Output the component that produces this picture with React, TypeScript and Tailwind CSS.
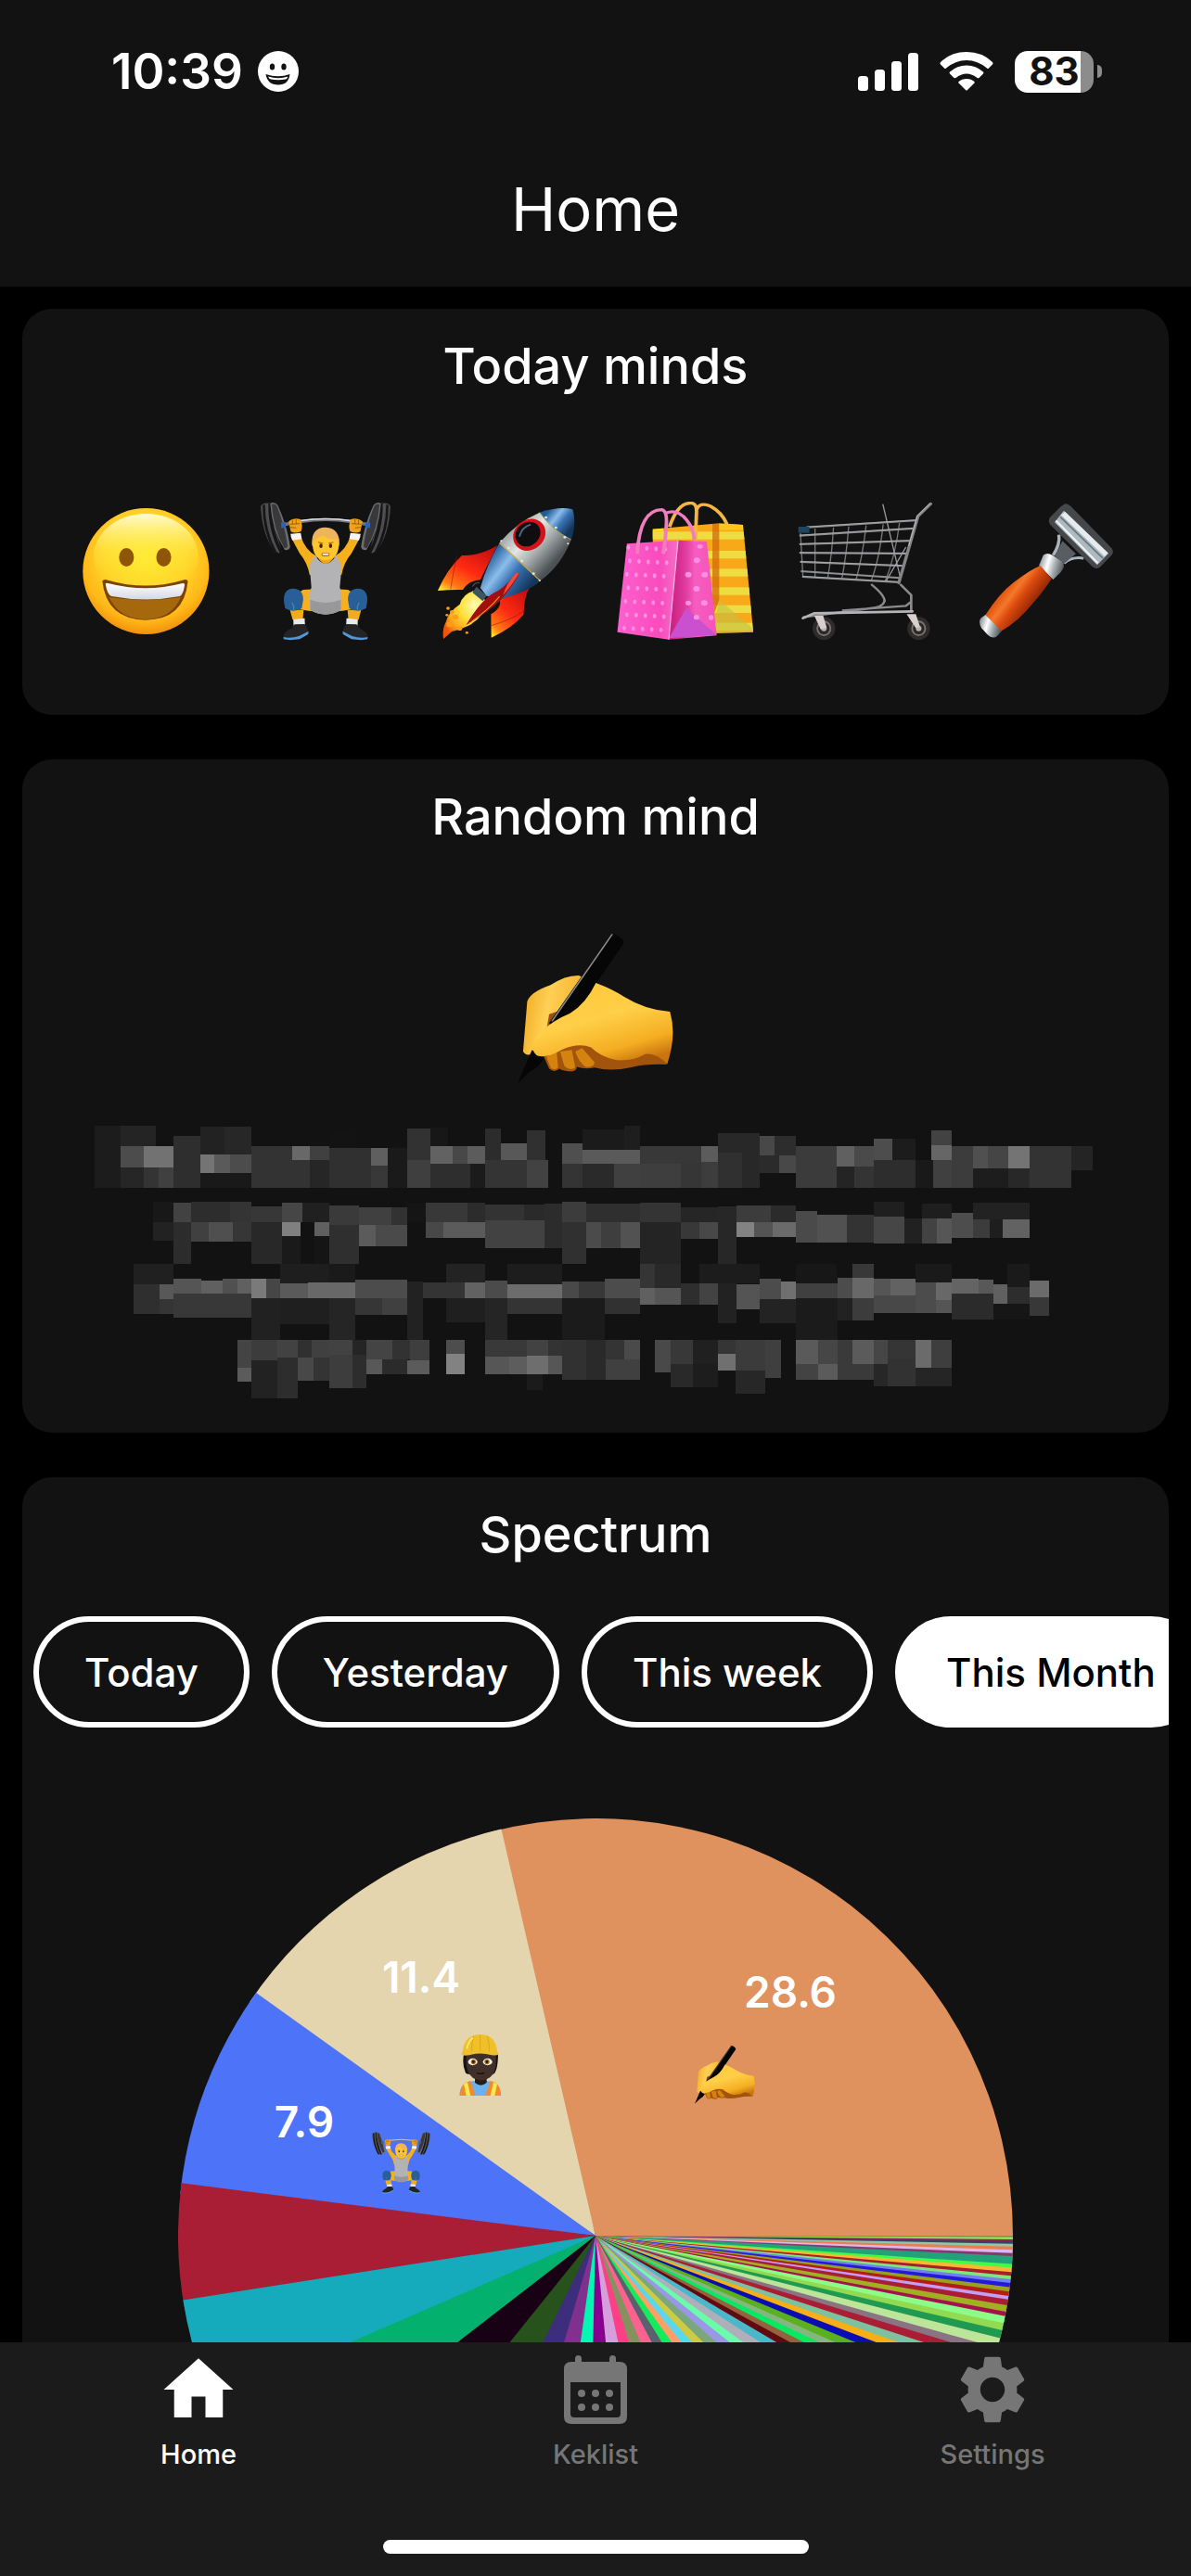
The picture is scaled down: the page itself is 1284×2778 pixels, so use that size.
import type { ReactNode, SVGProps } from "react";
import { MdHome, MdSettings } from "react-icons/md";

type Art = SVGProps<SVGSVGElement>;

/* ---------- Emoji illustrations ---------- */

function Grin(props: Art) {
  return (
    <svg viewBox="60 123 392 450" preserveAspectRatio="none" role="img" aria-label="grinning face" {...props}>
      <defs>
        <radialGradient id="grin-face" cx="0.5" cy="0.38" r="0.64">
          <stop offset="0" stopColor="#ffe92e" />
          <stop offset="0.5" stopColor="#ffd52b" />
          <stop offset="0.8" stopColor="#ffb818" />
          <stop offset="1" stopColor="#f08a0a" />
        </radialGradient>
        <linearGradient id="grin-shine" x1="0" y1="0" x2="0" y2="1">
          <stop offset="0" stopColor="#fffbd0" />
          <stop offset="0.45" stopColor="#fff04a" stopOpacity="0.35" />
          <stop offset="0.8" stopColor="#ffe92e" stopOpacity="0" />
        </linearGradient>
        <linearGradient id="grin-teeth" x1="0" y1="0" x2="0" y2="1">
          <stop offset="0" stopColor="#ffffff" />
          <stop offset="1" stopColor="#d3d8e4" />
        </linearGradient>
      </defs>
      <ellipse cx="257" cy="348" rx="178" ry="204" fill="url(#grin-face)" />
      <ellipse cx="257" cy="300" rx="147" ry="138" fill="url(#grin-shine)" />
      <ellipse cx="202" cy="303" rx="21" ry="30" fill="#8f560a" />
      <ellipse cx="307" cy="303" rx="21" ry="30" fill="#8f560a" />
      <path d="M134 380 Q138 372 150 377 Q256 412 360 377 Q375 372 375 382 Q364 505 256 506 Q146 503 134 380Z" fill="#7d4305" />
      <path d="M153 432 Q256 452 355 432 Q330 502 256 504 Q180 502 153 432Z" fill="#a5680c" />
      <path d="M143 390 Q144 384 153 388 Q256 418 357 388 Q367 385 366 392 Q362 424 352 429 Q256 450 160 429 Q148 425 143 390Z" fill="url(#grin-teeth)" />
    </svg>
  );
}

function Lifter(props: Art) {
  const plates = (
    <g>
      <path d="M580 138 Q586 126 600 128 L636 270 Q634 292 620 285 Q584 230 580 138Z" fill="#4a4a4c" />
      <path d="M586 134 Q584 210 616 284 L626 288 Q592 215 592 132Z" fill="#161618" />
      <path d="M594 130 L606 127 Q612 220 640 284 L630 290 Q598 225 594 130Z" fill="#505053" />
      <path d="M602 128 Q600 215 634 288 L642 286 Q612 220 610 127Z" fill="#161618" />
      <path d="M607 128 Q620 122 628 134 Q655 200 663 268 Q662 282 648 279 Q612 215 607 128Z" fill="#6d6d70" />
      <path d="M611 132 Q620 128 626 138 Q648 200 656 266 Q654 276 646 272 Q616 210 611 132Z" fill="#39393c" />
    </g>
  );
  const limb = (
    <g>
      <path d="M664 235 L693 234 Q705 280 738 300 L740 360 L718 360 Q712 320 690 290Z" fill="#f6b01d" />
      <path d="M664 227 L693 224 L696 244 L669 248Z" fill="#f5f5f8" />
      <path d="M659 187 Q672 174 692 180 Q700 200 694 219 Q678 228 665 220Z" fill="#eda41a" />
      <path d="M662 196 L690 194 M664 206 L680 208 M670 182 V196 M680 180 V196" stroke="#9c5a08" strokeWidth="2.5" fill="none" />
      <path d="M745 405 L700 408 Q682 415 688 450 L692 472 Q720 480 750 478Z" fill="#f6b01d" />
      <path d="M662 470 L701 474 L699 504 L670 505Z" fill="#f2ab1b" />
      <path d="M672 504 L704 500 L705 522 L673 524Z" fill="#e9e9ee" />
      <path d="M646 450 Q642 405 672 404 Q700 405 700 440 L696 468 Q672 484 649 468Z" fill="#285f98" />
      <path d="M668 450 Q675 460 673 474" stroke="#4a85bd" strokeWidth="3" fill="none" />
      <path d="M644 560 Q645 545 668 532 L676 520 L704 519 Q714 530 714 545 L690 562 Q660 570 644 560Z" fill="#242427" />
      <path d="M644 561 Q665 566 688 558 L715 542 L714 552 L690 568 Q660 573 645 568Z" fill="#5297d8" />
    </g>
  );
  return (
    <svg viewBox="567 123 392 450" preserveAspectRatio="none" role="img" aria-label="person lifting weights" {...props}>
      {plates}
      <g transform="matrix(-1 0 0 1 1526 0)">{plates}</g>
      <path d="M640 198 L692 188 Q763 174 836 188 L888 198" stroke="#74747a" strokeWidth="10" fill="none" />
      <path d="M690 185 Q763 172 836 185" stroke="#dcdce2" strokeWidth="5" fill="none" />
      <path d="M638 190 h13 v18 h-13z M875 190 h13 v18 h-13z" fill="#2a63b8" />
      {limb}
      <g transform="matrix(-1 0 0 1 1526 0)">{limb}</g>
      <path d="M733 296 Q763 350 794 296 L808 330 Q806 370 803 400 Q812 430 806 474 Q763 502 720 474 Q714 430 723 400 Q720 360 718 330Z" fill="#b3b3b6" />
      <path d="M720 440 Q763 460 806 440 L806 474 Q763 502 720 474Z" fill="#98989b" />
      <path d="M738 298 Q763 350 790 298 L784 290 H742Z" fill="#eda41a" />
      <path d="M726 250 Q726 220 763 220 Q801 220 801 250 Q802 312 763 313 Q725 312 726 250Z" fill="#ffc62e" />
      <path d="M725 268 Q720 206 763 206 Q806 208 801 268 L796 244 Q775 250 756 232 Q742 240 732 246Z" fill="#edb45c" />
      <ellipse cx="750" cy="266" rx="4.5" ry="7" fill="#3a2106" />
      <ellipse cx="777" cy="266" rx="4.5" ry="7" fill="#3a2106" />
      <path d="M742 254 L756 258 M785 254 L771 258" stroke="#a8660f" strokeWidth="3" />
      <rect x="751" y="288" width="24" height="12" rx="6" fill="#b06d18" />
      <rect x="754" y="290" width="18" height="6" rx="3" fill="#f5f0ea" />
    </svg>
  );
}

function Rocket(props: Art) {
  return (
    <svg viewBox="1073 123 392 450" preserveAspectRatio="none" role="img" aria-label="rocket" {...props}>
      <defs>
        <linearGradient id="rk-body" x1="0.1" y1="0.2" x2="0.75" y2="0.75">
          <stop offset="0" stopColor="#8d9494" />
          <stop offset="0.4" stopColor="#e3e6e2" />
          <stop offset="0.65" stopColor="#a9afae" />
          <stop offset="1" stopColor="#4b5154" />
        </linearGradient>
        <linearGradient id="rk-blue" x1="0.1" y1="0.3" x2="0.8" y2="0.8">
          <stop offset="0" stopColor="#235a98" />
          <stop offset="0.35" stopColor="#8cbdea" />
          <stop offset="0.6" stopColor="#3a74b5" />
          <stop offset="1" stopColor="#15365c" />
        </linearGradient>
        <linearGradient id="rk-fin" x1="0.8" y1="0" x2="0.1" y2="1">
          <stop offset="0" stopColor="#c40f0f" />
          <stop offset="0.5" stopColor="#ff2a12" />
          <stop offset="0.85" stopColor="#ff7d14" />
          <stop offset="1" stopColor="#ffe22b" />
        </linearGradient>
        <radialGradient id="rk-fire" cx="0.7" cy="0.3" r="0.8">
          <stop offset="0" stopColor="#fffbb8" />
          <stop offset="0.4" stopColor="#ffe23a" />
          <stop offset="0.75" stopColor="#ffa51c" />
          <stop offset="1" stopColor="#f0560b" />
        </radialGradient>
      </defs>
      <path d="M1246 265 Q1195 300 1146 297 Q1105 340 1078 411 Q1118 407 1149 408 Q1165 378 1198 376Z" fill="url(#rk-fin)" />
      <path d="M1337 402 Q1322 425 1320 488 Q1290 530 1229 563 L1228 487 Q1262 465 1251 435Z" fill="url(#rk-fin)" />
      <path d="M1132 298 Q1122 350 1114 406 M1228 524 Q1285 505 1320 478" stroke="#8e1208" strokeWidth="1.5" fill="none" />
      <path d="M1178 412 L1222 450 Q1205 500 1162 526 Q1140 538 1118 543 L1094 567 Q1090 535 1101 512 Q1108 480 1140 455 Q1150 420 1178 412Z" fill="url(#rk-fire)" />
      <g fill="#ff9d18">
        <circle cx="1107" cy="468" r="5" />
        <circle cx="1118" cy="480" r="6" />
        <circle cx="1104" cy="490" r="4" />
        <circle cx="1160" cy="547" r="4" />
        <circle cx="1140" cy="533" r="7" />
        <circle cx="1112" cy="520" r="9" />
        <circle cx="1128" cy="496" r="8" />
      </g>
      <path d="M1187 398 L1216 427 L1205 445 L1176 417Z" fill="#3c5561" />
      <path d="M1176 398 q6 -14 20 -12" stroke="#555" strokeWidth="3" fill="none" />
      <path d="M1252 256 L1368 378 Q1335 415 1255 437 L1216 428 L1198 402 Q1215 330 1252 256Z" fill="url(#rk-blue)" />
      <path d="M1365 158 Q1300 190 1252 256 L1368 378 Q1425 330 1454 246 Q1410 205 1365 158Z" fill="url(#rk-body)" />
      <path d="M1365 158 Q1420 137 1458 148 Q1470 190 1454 246 Q1400 215 1365 158Z" fill="url(#rk-blue)" />
      <path d="M1252 257 L1367 379" stroke="#d8ae36" strokeWidth="3" />
      <path d="M1365 158 Q1400 215 1454 246" stroke="#b9a44a" strokeWidth="2.5" fill="none" />
      <ellipse cx="1336" cy="230" rx="44" ry="53" transform="rotate(25 1336 230)" fill="#d3121a" />
      <ellipse cx="1332" cy="228" rx="34" ry="41" transform="rotate(25 1332 228)" fill="#100d10" />
      <path d="M1308 236 Q1315 205 1340 197" stroke="#4a6a80" strokeWidth="5" fill="none" />
      <g fill="#dfe4e6">
        <circle cx="1383" cy="174" r="4" />
        <circle cx="1411" cy="207" r="4" />
        <circle cx="1436" cy="238" r="4" />
        <circle cx="1278" cy="273" r="4" />
        <circle cx="1315" cy="315" r="4" />
        <circle cx="1348" cy="356" r="4" />
        <circle cx="1257" cy="250" r="3" />
        <circle cx="1365" cy="378" r="3" />
        <circle cx="1445" cy="259" r="3" />
      </g>
      <path d="M1301 350 L1307 360 Q1275 420 1252 445 Q1215 485 1158 522 Q1205 430 1250 410 Q1275 390 1301 350Z" fill="#a30f10" />
      <path d="M1301 350 L1306 358 Q1280 405 1262 425 Q1272 385 1301 350Z" fill="#f34a3c" />
      <path d="M1252 430 Q1220 475 1165 518" stroke="#f0a21e" strokeWidth="3" fill="none" />
    </svg>
  );
}

function Bags(props: Art) {
  const dots: [number, number][] = [];
  for (let row = 0; row < 7; row++) {
    for (let col = 0; col < 5; col++) {
      dots.push([(row % 2 ? 104 : 98) + col * 26 - row * 2, 271 + row * 43.5 + col * 1.5]);
    }
  }
  return (
    <svg viewBox="63 123 392 450" preserveAspectRatio="none" role="img" aria-label="shopping bags" {...props}>
      <defs>
        <linearGradient id="bag-pink" x1="0" y1="0" x2="1" y2="0">
          <stop offset="0" stopColor="#ff5fd0" />
          <stop offset="0.7" stopColor="#f94bbd" />
          <stop offset="1" stopColor="#f46fc6" />
        </linearGradient>
        <linearGradient id="bag-side" x1="0" y1="0" x2="1" y2="0">
          <stop offset="0" stopColor="#c41d7d" />
          <stop offset="0.35" stopColor="#e23ba0" />
          <stop offset="0.55" stopColor="#f65dc0" />
          <stop offset="1" stopColor="#f553b9" />
        </linearGradient>
        <clipPath id="bag-yellow">
          <path d="M166 212 L354 193 L421 198 L450 545 L330 549 L170 500Z" />
        </clipPath>
      </defs>
      <g clipPath="url(#bag-yellow)">
        <rect x="160" y="190" width="300" height="370" fill="#f9a81a" />
        {[220, 282, 340, 400, 458, 515].map((y) => (
          <rect key={y} x="160" y={y} width="300" height="25" fill="#eddc42" />
        ))}
        <path d="M335 193 L354 193 V440 L335 500Z" fill="#cf6c08" opacity="0.75" />
        <path d="M354 440 L450 535 V550 H335Z" fill="#c3c244" opacity="0.6" />
        <rect x="166" y="190" width="30" height="30" fill="#ffd828" />
        <rect x="354" y="193" width="68" height="22" fill="#ffc61b" />
      </g>
      <path d="M214 205 Q238 122 278 128 Q292 132 290 160 L287 250 M290 150 Q298 122 330 138 Q362 158 376 196" stroke="#f3b545" strokeWidth="10" fill="none" />
      <path d="M94 259 L238 248 L212 569 L67 545Z" fill="url(#bag-pink)" />
      <path d="M238 248 L319 252 L347 556 L212 569Z" fill="url(#bag-side)" />
      <path d="M261 468 L212 565 L346 554Z" fill="#c950cf" />
      <path d="M238 248 L212 569" stroke="#ffb3ea" strokeWidth="3" />
      <g fill="#ff8fdf">
        {dots.map(([x, y]) => (
          <ellipse key={`${x}-${y}`} cx={x} cy={y} rx="5" ry="8" />
        ))}
        <ellipse cx="291" cy="313" rx="9" ry="9" />
        <ellipse cx="267" cy="359" rx="9" ry="9" />
        <ellipse cx="313" cy="359" rx="9" ry="9" />
        <ellipse cx="290" cy="405" rx="9" ry="9" />
        <ellipse cx="267" cy="451" rx="8" ry="8" />
        <ellipse cx="312" cy="451" rx="9" ry="9" />
        <ellipse cx="290" cy="497" rx="8" ry="8" />
        <ellipse cx="331" cy="498" rx="7" ry="8" />
        <ellipse cx="300" cy="268" rx="8" ry="7" />
      </g>
      <path d="M123 292 Q130 150 192 149 Q208 152 205 200 Q202 260 196 292 M204 160 Q236 145 262 182 Q282 210 284 248" stroke="#f27cc0" strokeWidth="10" fill="none" />
    </svg>
  );
}

function Cart(props: Art) {
  return (
    <svg viewBox="570 123 392 450" preserveAspectRatio="none" role="img" aria-label="shopping cart" {...props}>
      <g fill="none" stroke="#77777a" strokeWidth="3.5">
        <path d="M583 225 L590 366 M624 210 V366 M676 206 Q672 290 660 368 M719 203 Q712 300 700 370 M768 200 Q758 300 740 374 M816 196 Q805 310 783 376 M862 192 Q850 300 822 380" />
        <path d="M815 131 L865 372 M880 270 L824 380" stroke="#9a9a9d" />
      </g>
      <g fill="none" stroke="#8f9092" strokeWidth="6">
        <path d="M600 206 L908 184 M580 233 L900 210 M580 261 L893 250 M580 289 L882 291 M582 318 L872 331 M584 348 L864 370 M588 366 L860 384" />
      </g>
      <g fill="none" stroke="#c9c9cc" strokeWidth="1.5">
        <path d="M600 204 L908 182 M580 231 L900 208 M580 259 L893 248 M580 287 L882 289 M582 316 L872 329 M588 364 L860 382" />
      </g>
      <path d="M950 130 L914 170 L860 386" stroke="#858588" strokeWidth="9" fill="none" strokeLinecap="round" strokeLinejoin="round" />
      <path d="M948 129 L912 169 L888 266" stroke="#c4c4c7" strokeWidth="2.5" fill="none" />
      <path d="M782 390 Q820 425 820 445 Q815 465 780 468 L590 497 M864 390 L895 425 V478 M893 448 L880 460 L700 475" stroke="#8b8b8e" strokeWidth="7" fill="none" />
      <path d="M590 500 L622 484 L898 478" stroke="#b5b5b8" strokeWidth="8" fill="none" strokeLinecap="round" />
      <rect x="577" y="204" width="31" height="20" fill="#1f4560" />
      {[649, 916].map((x) => (
        <g key={x}>
          <ellipse cx={x} cy="533" rx="32" ry="37" fill="#2f2b2b" />
          <ellipse cx={x} cy="533" rx="21" ry="25" fill="#77716f" />
          <ellipse cx={x} cy="533" rx="16" ry="19" fill="#2a2727" />
          <ellipse cx={x} cy="533" rx="8" ry="9" fill="#b9b1ae" />
        </g>
      ))}
      <path d="M622 492 H647 L657 530 L640 536Z M882 487 H908 L920 528 L908 532Z" fill="#d9cfcd" />
    </svg>
  );
}

function Razor(props: Art) {
  return (
    <svg viewBox="1074 123 392 450" preserveAspectRatio="none" role="img" aria-label="razor" {...props}>
      <defs>
        <linearGradient id="rz-handle" x1="0.25" y1="0.35" x2="0.65" y2="0.65">
          <stop offset="0" stopColor="#d94a08" />
          <stop offset="0.35" stopColor="#f4782a" />
          <stop offset="0.6" stopColor="#dc4a0e" />
          <stop offset="1" stopColor="#9a2a06" />
        </linearGradient>
        <linearGradient id="rz-metal" x1="0" y1="0.3" x2="1" y2="0.6">
          <stop offset="0" stopColor="#8b9196" />
          <stop offset="0.35" stopColor="#ffffff" />
          <stop offset="0.65" stopColor="#9fa8ac" />
          <stop offset="1" stopColor="#4b5053" />
        </linearGradient>
      </defs>
      <path d="M1308 230 Q1312 262 1292 296 M1322 322 Q1345 300 1378 306" stroke="#a9b4bd" strokeWidth="9" fill="none" />
      <path d="M1318 250 L1356 292 L1322 324 L1296 300Z" fill="#595d62" />
      <path d="M1264 296 Q1275 286 1290 296 L1318 318 Q1328 330 1314 350 L1292 375 L1252 330Z" fill="url(#rz-metal)" />
      <path d="M1256 330 L1288 372 Q1260 420 1236 450 Q1195 510 1144 543 L1101 490 Q1140 420 1180 385 Q1225 345 1256 330Z" fill="url(#rz-handle)" />
      <path d="M1101 489 L1147 542 L1134 558 Q1122 570 1106 552 L1090 532 Q1080 512 1088 500Z" fill="url(#rz-metal)" />
      <path d="M1325 130 Q1332 128 1342 138 L1458 275 Q1464 288 1455 298 L1425 334 Q1414 344 1403 334 L1284 198 Q1276 186 1283 174 L1312 140Z" fill="#46474a" />
      <path d="M1322 152 L1448 290 L1416 328 L1296 190Z" fill="#aebac0" />
      <path d="M1326 156 L1446 289 L1437 300 L1314 166Z" fill="#e6ecee" />
      <path d="M1312 172 L1432 306" stroke="#6b7880" strokeWidth="5" />
      <path d="M1300 184 L1418 322" stroke="#eef3f5" strokeWidth="6" />
    </svg>
  );
}

function WritingHand(props: Art) {
  return (
    <svg viewBox="676 124 227 422" preserveAspectRatio="none" role="img" aria-label="writing hand" {...props}>
      <defs>
        <linearGradient id="wh-palm" x1="0.2" y1="0" x2="0.7" y2="1">
          <stop offset="0" stopColor="#ffc93a" />
          <stop offset="0.45" stopColor="#ffcf48" />
          <stop offset="0.8" stopColor="#f5ae22" />
          <stop offset="1" stopColor="#c9740e" />
        </linearGradient>
        <linearGradient id="wh-index" x1="0" y1="0" x2="1" y2="0.2">
          <stop offset="0" stopColor="#efa51a" />
          <stop offset="0.4" stopColor="#ffd055" />
          <stop offset="1" stopColor="#f2a81d" />
        </linearGradient>
      </defs>
      <path d="M714 468 L722 503 Q729 516 737 503 Q742 510 755 511 Q763 508 762 498 Q775 506 788 500 Q812 512 842 499 Q862 489 893 491 L898 450 L780 420Z" fill="#a2530c" />
      <path d="M718 470 L724 500 Q730 510 735 500 L733 455Z M738 455 L744 495 Q752 510 760 500 L755 450Z M760 455 Q765 485 775 498 Q788 500 788 485 L770 445Z" fill="#d5830f" />
      <path d="M684 455 L690 315 Q694 288 724 268 Q746 240 765 241 L790 262 L740 350 L716 400 L697 460 Q689 470 684 455Z" fill="url(#wh-index)" />
      <path d="M718 395 L722 350 L745 335 L740 370Z" fill="#96500c" />
      <path d="M812 126 Q815 122 820 128 Q832 140 830 152 L774 310 Q766 335 748 350 L725 385 L722 374Z" fill="#060606" />
      <path d="M814 125 L726 370" stroke="#8a8a8a" strokeWidth="2.5" />
      <path d="M697 450 L676 545 L693 512 Q708 498 714 474Z" fill="#060606" />
      <path d="M790 262 Q815 280 832 302 Q862 338 898 343 Q908 410 894 490 Q878 458 862 462 Q845 482 820 479 Q797 470 783 443 Q765 428 740 450 Q718 475 704 466 Q692 445 704 408 Q728 366 752 348 Q776 320 790 262Z" fill="url(#wh-palm)" />
    </svg>
  );
}

function Worker(props: Art) {
  return (
    <svg viewBox="45 41 138 199" preserveAspectRatio="none" role="img" aria-label="construction worker" {...props}>
      <path d="M46 240 Q46 196 92 192 H134 Q180 196 181 240Z" fill="#6db0ee" />
      <path d="M48 240 Q48 208 66 198 L82 192 L98 240Z M179 240 Q180 208 162 198 L146 192 L130 240Z" fill="#f08a2c" />
      <path d="M60 202 L72 196 L82 240 H68Z M168 202 L156 196 L146 240 H160Z" fill="#f6e94e" />
      <path d="M96 175 H134 V198 Q115 214 96 198Z" fill="#2a1b15" />
      <path d="M60 106 Q54 140 66 166 L72 170 H156 Q170 160 171 106Z" fill="#16100e" />
      <path d="M68 100 H164 V140 Q158 188 116 190 Q74 188 68 140Z" fill="#412f29" />
      <ellipse cx="89" cy="130" rx="15" ry="11" fill="#f5f0ea" />
      <ellipse cx="137" cy="130" rx="15" ry="11" fill="#f5f0ea" />
      <circle cx="91" cy="130" r="8" fill="#a86a1e" />
      <circle cx="135" cy="130" r="8" fill="#a86a1e" />
      <circle cx="91" cy="130" r="4" fill="#120a04" />
      <circle cx="135" cy="130" r="4" fill="#120a04" />
      <path d="M102 166 Q114 172 126 166" stroke="#160c09" strokeWidth="4" fill="none" />
      <path d="M56 98 Q60 42 113 41 Q164 42 168 96 L173 104 Q170 111 150 108 Q113 98 78 108 Q56 112 52 104Z" fill="#f0c02a" />
      <path d="M92 46 Q84 70 86 96 M113 42 V94 M136 46 Q144 70 142 96" stroke="#dda618" strokeWidth="3" fill="none" />
      <path d="M70 88 Q76 60 90 52" stroke="#ffe36b" strokeWidth="6" fill="none" />
    </svg>
  );
}

/* ---------- Pixelated note text ---------- */

// x, y, width, height, grey level
const MOSAIC: [number, number, number, number, string][] = [
  [57, 664, 38, 174, "1c"], [95, 664, 51, 57, "24"], [95, 721, 33, 60, "4c"], [128, 721, 44, 60, "72"],
  [95, 781, 33, 57, "26"], [128, 781, 22, 57, "34"], [150, 781, 22, 57, "40"], [172, 693, 39, 145, "2e"],
  [211, 666, 35, 79, "22"], [246, 666, 39, 79, "27"], [211, 745, 21, 52, "74"], [232, 745, 23, 52, "5a"],
  [255, 745, 30, 52, "4c"], [211, 797, 74, 41, "19"], [285, 721, 85, 117, "33"], [345, 721, 25, 39, "68"],
  [370, 721, 29, 39, "40"], [370, 760, 29, 78, "26"], [399, 684, 38, 43, "13"], [399, 727, 61, 111, "30"],
  [460, 727, 24, 49, "5f"], [460, 776, 24, 62, "38"], [484, 727, 28, 111, "1a"], [512, 672, 34, 166, "32"],
  [512, 760, 34, 78, "3f"], [546, 670, 26, 51, "17"], [546, 721, 33, 50, "62"], [579, 721, 21, 50, "48"],
  [600, 721, 26, 50, "5c"], [546, 771, 58, 67, "2e"], [604, 771, 22, 67, "1b"], [626, 672, 23, 88, "2c"],
  [649, 713, 38, 47, "58"], [687, 677, 27, 83, "30"], [626, 760, 61, 78, "34"], [687, 760, 31, 78, "42"],
  [739, 713, 29, 58, "4f"], [768, 674, 61, 58, "1b"], [829, 664, 23, 68, "1e"], [768, 732, 84, 39, "5a"],
  [739, 771, 29, 67, "34"], [768, 771, 46, 67, "2a"], [814, 771, 38, 67, "40"], [852, 721, 89, 117, "38"],
  [852, 771, 59, 67, "3e"], [941, 721, 24, 45, "5c"], [911, 766, 30, 72, "36"], [941, 766, 24, 72, "3d"],
  [965, 685, 61, 153, "28"], [965, 740, 35, 98, "30"], [1026, 693, 22, 54, "48"], [1048, 693, 31, 54, "2d"],
  [1026, 747, 28, 50, "2b"], [1054, 747, 25, 50, "48"], [1079, 721, 59, 117, "3b"], [1138, 721, 26, 58, "60"],
  [1164, 721, 28, 58, "4a"], [1138, 779, 26, 59, "24"], [1164, 779, 28, 59, "34"], [1192, 700, 27, 60, "4d"],
  [1219, 700, 34, 60, "1c"], [1192, 760, 61, 78, "2d"], [1253, 760, 26, 78, "19"], [1276, 677, 30, 42, "42"],
  [1276, 719, 30, 41, "66"], [1279, 760, 27, 78, "40"], [1306, 721, 31, 117, "3c"], [1337, 721, 22, 63, "50"],
  [1359, 721, 29, 63, "45"], [1388, 721, 31, 63, "74"], [1337, 784, 51, 54, "1d"], [1388, 784, 31, 54, "28"],
  [1419, 721, 61, 117, "33"], [1480, 721, 31, 68, "24"],

  [142, 878, 30, 58, "18"], [172, 881, 25, 55, "42"], [197, 878, 57, 58, "2d"], [254, 878, 31, 58, "34"],
  [142, 936, 30, 52, "22"], [172, 936, 25, 117, "2c"], [197, 936, 26, 54, "40"], [223, 936, 35, 54, "4f"],
  [258, 936, 27, 54, "36"], [285, 891, 45, 45, "37"], [330, 881, 30, 55, "46"], [360, 881, 39, 55, "20"],
  [285, 936, 45, 117, "28"], [330, 936, 27, 39, "80"], [378, 936, 21, 39, "60"], [330, 975, 27, 78, "1a"],
  [378, 975, 21, 78, "15"], [399, 889, 43, 54, "3a"], [442, 894, 47, 49, "40"], [489, 894, 23, 49, "32"],
  [399, 943, 43, 110, "2f"], [442, 943, 24, 61, "5b"], [466, 943, 46, 61, "4a"], [512, 881, 27, 55, "15"],
  [539, 881, 61, 55, "38"], [600, 881, 26, 55, "2c"], [539, 936, 26, 44, "48"], [565, 936, 61, 44, "5b"],
  [626, 886, 57, 44, "33"], [683, 886, 29, 44, "2a"], [712, 883, 27, 126, "2c"], [626, 930, 86, 79, "42"],
  [739, 878, 34, 58, "3c"], [773, 883, 79, 53, "2f"], [739, 936, 34, 117, "30"], [773, 936, 22, 73, "4b"],
  [795, 936, 28, 73, "3e"], [823, 936, 29, 73, "52"], [852, 881, 60, 55, "34"], [852, 936, 60, 117, "24"],
  [912, 894, 53, 42, "26"], [912, 936, 26, 46, "38"], [938, 936, 27, 46, "48"], [965, 891, 27, 162, "27"],
  [992, 889, 50, 47, "3c"], [1042, 889, 37, 47, "2b"], [992, 936, 26, 41, "82"], [1018, 936, 27, 41, "54"],
  [1045, 936, 34, 41, "6a"], [1079, 904, 31, 89, "4a"], [1110, 915, 43, 78, "51"], [1153, 915, 39, 78, "33"],
  [1192, 878, 45, 42, "1f"], [1192, 920, 45, 76, "46"], [1237, 925, 26, 71, "21"], [1263, 883, 43, 42, "1e"],
  [1263, 925, 22, 71, "42"], [1285, 925, 21, 71, "56"], [1306, 909, 31, 71, "4d"], [1337, 881, 82, 47, "22"],
  [1337, 928, 24, 52, "3c"], [1361, 928, 20, 52, "1e"], [1381, 928, 38, 52, "62"],

  [114, 1053, 58, 58, "20"], [114, 1111, 37, 83, "2f"], [151, 1111, 21, 41, "58"], [151, 1152, 21, 42, "35"],
  [172, 1095, 40, 42, "55"], [212, 1100, 31, 37, "60"], [243, 1095, 22, 42, "50"], [265, 1095, 20, 42, "60"],
  [285, 1095, 22, 55, "7a"], [307, 1095, 21, 55, "46"], [172, 1137, 113, 68, "38"], [328, 1053, 71, 55, "1e"],
  [399, 1053, 38, 52, "1a"], [328, 1108, 40, 42, "5a"], [368, 1105, 69, 45, "68"], [285, 1150, 43, 117, "21"],
  [328, 1150, 71, 73, "1f"], [399, 1150, 38, 117, "25"], [437, 1098, 75, 52, "4c"], [437, 1150, 39, 47, "36"],
  [476, 1150, 36, 47, "40"], [512, 1103, 23, 164, "22"], [535, 1105, 61, 45, "34"], [570, 1053, 56, 52, "23"],
  [596, 1105, 30, 45, "62"], [570, 1150, 56, 68, "1f"], [626, 1100, 32, 50, "4b"], [658, 1053, 81, 58, "1d"],
  [658, 1111, 81, 39, "6c"], [626, 1150, 32, 117, "25"], [658, 1150, 81, 44, "34"], [739, 1103, 24, 47, "49"],
  [763, 1103, 37, 47, "38"], [800, 1095, 52, 55, "4c"], [739, 1150, 61, 117, "1b"], [800, 1150, 52, 44, "31"],
  [852, 1053, 22, 68, "35"], [874, 1053, 38, 68, "29"], [852, 1121, 22, 47, "60"], [874, 1121, 38, 47, "55"],
  [912, 1108, 27, 60, "2e"], [939, 1108, 26, 60, "43"], [939, 1053, 87, 55, "1c"], [965, 1108, 27, 112, "22"],
  [992, 1111, 34, 70, "54"], [1026, 1095, 31, 57, "4c"], [1057, 1103, 22, 49, "70"], [1026, 1152, 53, 68, "23"],
  [1079, 1053, 60, 55, "17"], [1079, 1108, 61, 42, "40"], [1140, 1092, 21, 58, "4c"], [1161, 1053, 31, 39, "38"],
  [1161, 1092, 31, 58, "68"], [1079, 1150, 61, 117, "1b"], [1140, 1150, 21, 63, "22"], [1161, 1150, 31, 63, "3c"],
  [1192, 1095, 61, 47, "55"], [1217, 1095, 36, 47, "62"], [1192, 1142, 61, 50, "48"], [1253, 1053, 53, 52, "1a"],
  [1253, 1105, 30, 87, "4c"], [1283, 1105, 23, 50, "68"], [1283, 1155, 23, 37, "55"], [1306, 1095, 39, 42, "64"],
  [1345, 1098, 22, 39, "58"], [1306, 1137, 61, 73, "2b"], [1367, 1111, 20, 55, "60"], [1387, 1053, 32, 66, "1a"],
  [1387, 1119, 32, 47, "2d"], [1367, 1166, 52, 44, "16"], [1419, 1100, 29, 47, "6b"], [1419, 1147, 29, 53, "38"],

  [265, 1267, 20, 79, "44"], [265, 1346, 20, 39, "5b"], [285, 1267, 38, 58, "3c"], [323, 1267, 30, 50, "42"],
  [353, 1267, 21, 50, "30"], [374, 1267, 25, 50, "40"], [285, 1325, 38, 107, "22"], [323, 1317, 30, 115, "2d"],
  [353, 1317, 23, 65, "48"], [376, 1317, 23, 65, "34"], [399, 1267, 34, 42, "42"], [433, 1267, 20, 42, "25"],
  [399, 1309, 34, 94, "3d"], [433, 1309, 20, 94, "2d"], [453, 1267, 38, 55, "44"], [491, 1267, 26, 55, "32"],
  [517, 1267, 28, 58, "3e"], [453, 1322, 23, 42, "58"], [476, 1322, 36, 42, "2b"], [512, 1325, 33, 39, "5b"],
  [570, 1267, 26, 40, "4d"], [570, 1307, 26, 57, "82"], [626, 1267, 61, 48, "39"], [687, 1267, 31, 45, "42"],
  [718, 1267, 21, 45, "33"], [626, 1315, 35, 49, "56"], [661, 1315, 26, 49, "5d"], [687, 1312, 31, 52, "6e"],
  [718, 1312, 21, 52, "56"], [687, 1364, 23, 45, "1b"], [739, 1267, 34, 113, "31"], [773, 1267, 29, 113, "2a"],
  [802, 1267, 27, 55, "34"], [829, 1267, 23, 55, "4a"], [802, 1322, 50, 58, "40"], [873, 1267, 23, 92, "49"],
  [896, 1267, 33, 69, "38"], [929, 1267, 36, 69, "20"], [896, 1336, 33, 65, "29"], [929, 1336, 36, 65, "1d"],
  [965, 1267, 26, 40, "35"], [965, 1307, 26, 47, "70"], [991, 1267, 44, 87, "3b"], [1035, 1267, 22, 108, "3f"],
  [991, 1354, 44, 65, "27"], [1079, 1267, 33, 68, "5a"], [1112, 1267, 28, 68, "46"], [1140, 1267, 22, 68, "3a"],
  [1162, 1267, 30, 68, "5b"], [1192, 1267, 21, 68, "46"], [1079, 1335, 33, 45, "43"], [1112, 1335, 28, 45, "5b"],
  [1140, 1335, 52, 45, "3a"], [1213, 1267, 40, 53, "35"], [1213, 1320, 40, 78, "32"], [1192, 1335, 21, 63, "27"],
  [1253, 1267, 24, 79, "6b"], [1277, 1267, 29, 79, "3e"], [1253, 1346, 53, 52, "25"],
];

function HiddenNote() {
  return (
    <svg viewBox="57 664 1460 773" preserveAspectRatio="none" shapeRendering="crispEdges" className="mt-[45px] h-[296px] w-full" role="img" aria-label="Hidden note text">
      {MOSAIC.map(([x, y, w, h, g], i) => (
        <rect key={i} x={x} y={y} width={w} height={h} fill={`#${g}${g}${g}`} />
      ))}
    </svg>
  );
}

/* ---------- Spectrum pie ---------- */

// Colour and end angle of every slice, counter-clockwise from the positive x axis
const SLICES: [string, number][] = [
  ["#df915e", 103.04], ["#e5d5af", 144.4], ["#4c73f8", 172.75], ["#a91e34", 188.87], ["#15abbd", 203.5],
  ["#04b06e", 217.7], ["#180015", 231.2], ["#27521c", 243.8], ["#3c2e7c", 253.6], ["#82308d", 262],
  ["#04f7b2", 268.7], ["#87008f", 275.5], ["#d49fdc", 282], ["#fd3f85", 287.5], ["#879160", 292.9],
  ["#fb6290", 297.8], ["#5b606f", 301.9], ["#17ea5b", 305.6], ["#ff9f66", 308.9], ["#5cd6ed", 312.2],
  ["#cdcb42", 315.3], ["#7ba77d", 318.6], ["#9a97e5", 321.5], ["#6afcaa", 324.2], ["#b0aebb", 327.1],
  ["#4bb8ca", 329.5], ["#610a10", 331.3], ["#94623c", 332.9], ["#07e863", 334.5], ["#86b67f", 336],
  ["#5bb01f", 337.7], ["#0a0eb1", 339.2], ["#f8ae14", 340.6], ["#7fc19e", 342], ["#a91e34", 343.3],
  ["#8a7484", 344.4], ["#bde59a", 345.8], ["#209a50", 346.9], ["#92da50", 347.9], ["#8cfb88", 348.9],
  ["#a5114e", 349.5], ["#a1af22", 350.4], ["#a91e34", 351.2], ["#c49df5", 351.7], ["#b41d12", 352.3],
  ["#98a11f", 352.9], ["#2418dd", 353.5], ["#7180ea", 354], ["#7ce87b", 354.5], ["#a91e2c", 355],
  ["#fab733", 355.6], ["#41fb4b", 356.1], ["#23a17a", 357.2], ["#87386d", 357.6], ["#e0b7ec", 358.05],
  ["#e87f50", 358.5], ["#92c8a5", 358.9], ["#2d4860", 359.2], ["#8d2060", 359.5], ["#9adf50", 359.8],
  ["#5f9a66", 360],
];

const RADIUS = 450;

function slicePath(from: number, to: number) {
  const point = (deg: number) => {
    const a = (deg * Math.PI) / 180;
    return `${(RADIUS * Math.cos(a)).toFixed(2)} ${(-RADIUS * Math.sin(a)).toFixed(2)}`;
  };
  return `M0 0 L${point(from)} A${RADIUS} ${RADIUS} 0 0 0 ${point(to)}Z`;
}

function SpectrumPie() {
  return (
    <svg viewBox="-450 -450 900 900" className="mx-auto mt-[98px] block w-[900px] max-w-full" role="img" aria-label="Share of each mind this month">
      {/* Each slice runs a little under the next one, so no background shows through the seams */}
      {SLICES.map(([color, end], i) => (
        <path key={i} d={slicePath(i === 0 ? 0 : SLICES[i - 1][1], Math.min(end + 1.5, 360))} fill={color} />
      ))}
      <g className="fill-white text-[46px] font-semibold" textAnchor="middle">
        <text x="210" y="-246">28.6</text>
        <text x="-188" y="-262">11.4</text>
        <text x="-314" y="-106">7.9</text>
      </g>
      <WritingHand x={107} y={-205} width={65} height={63} />
      <Worker x={-147} y={-217} width={46} height={66} />
      <Lifter x={-243} y={-112} width={67} height={67} />
    </svg>
  );
}

/* ---------- Chrome ---------- */

function StatusBar() {
  return (
    <div className="flex h-[154px] items-center justify-between pr-24 pl-30">
      <div className="flex items-center gap-4">
        <span className="text-[53px] leading-none font-semibold">10:39</span>
        <svg viewBox="0 0 44 44" className="size-11" aria-hidden="true">
          <circle cx="22" cy="22" r="22" fill="#fff" />
          <ellipse cx="15.5" cy="17" rx="2.7" ry="3.5" fill="#121212" />
          <ellipse cx="28" cy="17" rx="2.7" ry="3.5" fill="#121212" />
          <path d="M8.5 25 Q22 29.500 34.500 25 Q33 36.500 22 36.500 Q10.500 36.500 8.500 25Z" fill="#121212" />
          <path d="M11 27.500 Q22 31 32.500 27.500 Q31.500 30 30 30.500 Q22 32 14 30.500 Q12 30 11 27.500Z" fill="#fff" />
        </svg>
      </div>
      <div className="flex items-center gap-[23px]">
        <svg viewBox="0 0 65 42" className="h-[42px] w-[65px]" fill="#fff" aria-label="Signal strength" role="img">
          <rect x="0" y="26" width="11" height="16" rx="3.500" />
          <rect x="18" y="19" width="11" height="23" rx="3.500" />
          <rect x="36" y="10" width="11" height="32" rx="3.500" />
          <rect x="54" y="1" width="11" height="41" rx="3.500" />
        </svg>
        <svg viewBox="0 0 58 42" className="h-[42px] w-[58px]" fill="#fff" aria-label="Wi-Fi" role="img">
          <path d="M29 0 Q46 0 57 11 Q58 12.500 57 13.500 L53 17.500 Q52 18.500 51 17.500 Q41 9 29 9 Q17 9 7 17.500 Q6 18.500 5 17.500 L1 13.500 Q0 12.500 1 11 Q12 0 29 0Z" />
          <path d="M29 14.500 Q39 14.500 47 21.500 Q48 22.500 47 23.500 L42.500 28 Q41.500 28.500 40.500 28 Q35 23.500 29 23.500 Q23 23.500 17.500 28 Q16.500 28.500 15.500 28 L11 23.500 Q10 22.500 11 21.500 Q19 14.500 29 14.500Z" />
          <path d="M29 29 Q34 29 37.500 32 Q38 33 37.500 33.500 L30 41 Q29 42 28 41 L20.500 33.500 Q20 33 20.500 32 Q24 29 29 29Z" />
        </svg>
        <div className="flex items-center gap-1">
          <div className="flex h-[45px] w-[85px] items-center justify-center rounded-[14px] bg-linear-to-r from-white from-84% to-[#8c8c8c] to-84%">
            <span className="text-[42px] leading-none font-bold text-[#121212]">83</span>
          </div>
          <div className="h-[14px] w-[5px] rounded-r-full bg-[#8c8c8c]" />
        </div>
      </div>
    </div>
  );
}

function Card({ title, children }: { title: string; children: ReactNode }) {
  return (
    <section className="overflow-hidden rounded-[32px] bg-[#121212] pt-6">
      <h2 className="text-center text-[54px] leading-[76px] font-medium">{title}</h2>
      {children}
    </section>
  );
}

function CalendarIcon() {
  return (
    <svg viewBox="0 0 70 76" className="h-[76px] w-[70px]" fill="currentColor" aria-hidden="true">
      <rect x="13" y="1" width="7" height="18" rx="3.500" />
      <rect x="50" y="1" width="7" height="18" rx="3.500" />
      <path fillRule="evenodd" d="M9 8 H61 Q69 8 69 16 V67 Q69 75 61 75 H9 Q1 75 1 67 V16 Q1 8 9 8Z M8 30 V64 Q8 68 12 68 H58 Q62 68 62 64 V30Z" />
      {[20, 35, 50].map((x) => (
        <g key={x}>
          <circle cx={x} cy="42" r="4" />
          <circle cx={x} cy="57" r="4" />
        </g>
      ))}
    </svg>
  );
}

function Tab({ label, active, children }: { label: string; active?: boolean; children: ReactNode }) {
  return (
    <a
      href="#"
      aria-current={active ? "page" : undefined}
      className={`flex flex-1 flex-col items-center gap-1 ${active ? "text-white" : "text-[#767676]"}`}
    >
      <span className="flex h-[90px] items-center">{children}</span>
      <span className="text-[29px] leading-[42px] font-medium">{label}</span>
    </a>
  );
}

const RANGES = ["Today", "Yesterday", "This week", "This Month"];
const EMOJI = [Grin, Lifter, Rocket, Bags, Cart, Razor];

export default function App() {
  return (
    <div className="flex h-screen flex-col bg-black font-['Inter',sans-serif] text-white">
      <header className="bg-[#121212]">
        <StatusBar />
        <h1 className="flex h-[155px] items-center justify-center pb-3 text-[65px] leading-none">Home</h1>
      </header>

      <main className="flex min-h-0 flex-1 flex-col overflow-hidden">
        <div className="flex flex-col gap-12 p-6">
          <Card title="Today minds">
            <div className="mt-[108px] flex justify-around px-9 pb-20">
              {EMOJI.map((Emoji, i) => (
                <Emoji key={i} className="size-[150px]" />
              ))}
            </div>
          </Card>

          <Card title="Random mind">
            <div className="flex flex-col items-center px-[78px] pt-[88px] pb-[35px]">
              <WritingHand className="h-[162px] w-[168px]" />
              <HiddenNote />
            </div>
          </Card>

          <Card title="Spectrum">
            <div className="mt-[50px] flex gap-6 overflow-hidden pl-3">
              {RANGES.map((range) => (
                <button
                  key={range}
                  type="button"
                  aria-pressed={range === "This Month"}
                  className={`h-[120px] shrink-0 rounded-full border-6 border-white px-[49px] text-[42px] font-medium whitespace-nowrap ${
                    range === "This Month" ? "bg-white text-black" : "text-white"
                  }`}
                >
                  {range}
                </button>
              ))}
            </div>
            <SpectrumPie />
          </Card>
        </div>
      </main>

      <nav className="bg-[#1b1b1b] pb-6" aria-label="Main">
        <div className="flex pt-[6px]">
          <Tab label="Home" active>
            <MdHome className="size-[90px]" />
          </Tab>
          <Tab label="Keklist">
            <CalendarIcon />
          </Tab>
          <Tab label="Settings">
            <MdSettings className="size-[88px]" />
          </Tab>
        </div>
        <div className="mx-auto mt-[71px] h-[15px] w-[459px] max-w-full rounded-full bg-white" />
      </nav>
    </div>
  );
}
